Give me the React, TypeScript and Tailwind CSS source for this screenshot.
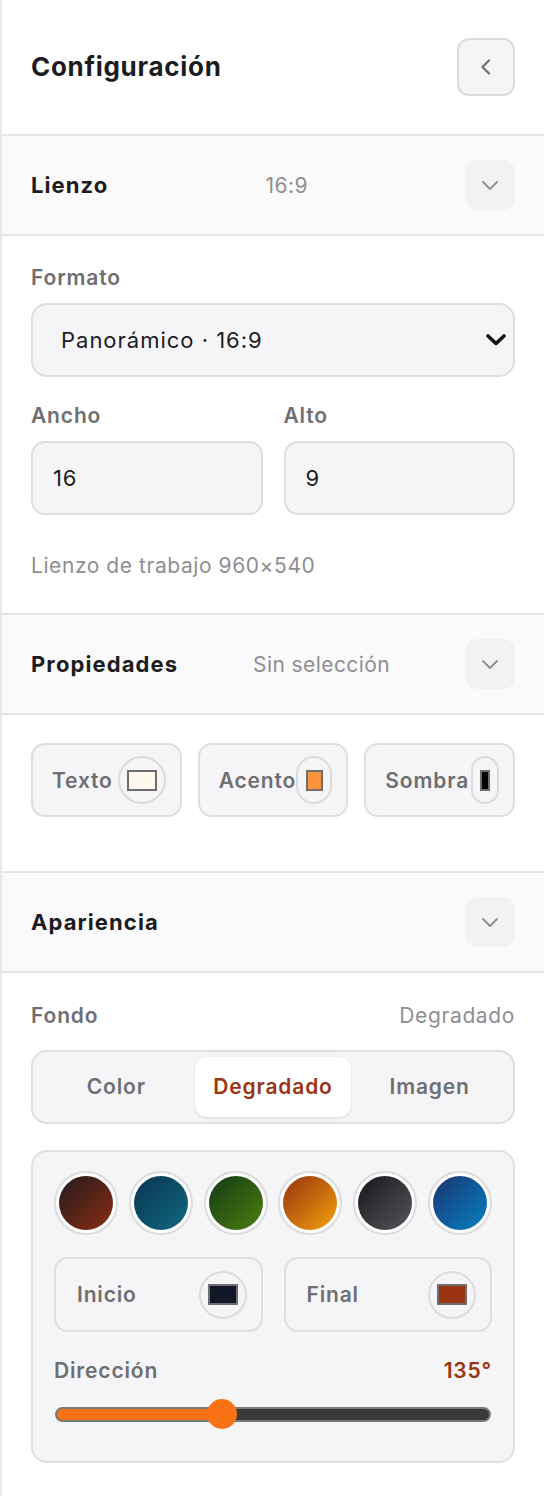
import React from "react";

function ChevronDownThin() {
  return (
    <svg width="18" height="11" viewBox="0 0 18 11" fill="none">
      <path d="M2 2 L9 9 L16 2" stroke="#8e8e93" strokeWidth="1.8" strokeLinecap="round" strokeLinejoin="round" />
    </svg>
  );
}

function SectionHeader({ title, summary }: { title: string; summary?: string }) {
  return (
    <div className="h-[100px] bg-[#fafafa] border-b-2 border-[#e5e5e7] flex items-center pl-[29px] pr-[29px]">
      <span className="text-[22px] font-bold tracking-[0.05em] text-[#1c1c1e] leading-none">{title}</span>
      <span className="flex-1 text-center text-[21px] tracking-[0.02em] text-[#8e8e93] leading-none">{summary ?? ""}</span>
      <div className="w-[50px] h-[50px] rounded-[12px] bg-[#f2f2f4] flex items-center justify-center">
        <ChevronDownThin />
      </div>
    </div>
  );
}

function ColorWell({ color, w, sw }: { color: string; w: number; sw: number }) {
  return (
    <div
      className="h-[48px] rounded-full border-2 border-[#dcdcde] flex items-center justify-center shrink-0"
      style={{ width: w }}
    >
      <div className="h-[21px] border-2 border-[#6e6e6e]" style={{ width: sw, background: color }} />
    </div>
  );
}

function Chip({ label, color, w, sw }: { label: string; color: string; w: number; sw: number }) {
  return (
    <div className="h-[74px] rounded-[14px] border-2 border-[#dedee0] bg-[#f5f5f7] flex items-center justify-between pl-[19px] pr-[14px]">
      <span className="text-[21px] font-semibold tracking-[0.04em] text-[#6e6e73] leading-none whitespace-nowrap">{label}</span>
      <ColorWell color={color} w={w} sw={sw} />
    </div>
  );
}

const swatches = [
  "bg-[linear-gradient(135deg,#231a20,#8a2d10)]",
  "bg-[linear-gradient(135deg,#0b3452,#0f6a80)]",
  "bg-[linear-gradient(135deg,#123a17,#4d7f10)]",
  "bg-[linear-gradient(135deg,#94340f,#f5a00c)]",
  "bg-[linear-gradient(135deg,#18181b,#55555c)]",
  "bg-[linear-gradient(135deg,#1c3570,#0580c4)]",
];

export default function App() {
  return (
    <div className="w-[544px] min-h-[1496px] bg-white border-l-2 border-[#e8e8ea] font-['Inter',_'Noto_Sans',sans-serif] text-[#1c1c1e]">
      {/* Header */}
      <div className="h-[136px] border-b-2 border-[#e5e5e7] flex items-center justify-between pl-[29px] pr-[29px]">
        <h1 className="text-[26px] font-bold tracking-[0.027em] leading-none text-[#1c1c1e]">Configuración</h1>
        <button className="w-[58px] h-[58px] rounded-[12px] border-2 border-[#dcdcde] bg-[#f5f5f7] flex items-center justify-center">
          <svg width="14" height="18" viewBox="0 0 14 18" fill="none">
            <path d="M10 2.5 L3.5 9 L10 15.5" stroke="#6e6e73" strokeWidth="2.2" strokeLinecap="round" strokeLinejoin="round" />
          </svg>
        </button>
      </div>

      {/* Lienzo */}
      <SectionHeader title="Lienzo" summary="16:9" />
      <div className="border-b-2 border-[#e5e5e7] pl-[29px] pr-[29px] pt-[28px] pb-[33px]">
        <div className="h-[28px] flex items-center text-[21px] font-semibold tracking-[0.04em] text-[#6e6e73]">Formato</div>
        <div className="mt-[11px] h-[74px] rounded-[16px] border-2 border-[#dedee0] bg-[#f5f5f7] flex items-center justify-between pl-[28px] pr-[6px]">
          <span className="text-[22px] tracking-[0.045em] text-[#1c1c1e]">Panorámico · 16:9</span>
          <svg width="22" height="14" viewBox="0 0 22 14" fill="none">
            <path d="M3 3 L11 10.5 L19 3" stroke="#111" strokeWidth="3.6" strokeLinecap="round" strokeLinejoin="round" />
          </svg>
        </div>
        <div className="mt-[25px] grid grid-cols-2 gap-[21px]">
          <div>
            <div className="h-[28px] flex items-center text-[21px] font-semibold tracking-[0.04em] text-[#6e6e73]">Ancho</div>
            <div className="mt-[11px] h-[74px] rounded-[14px] border-2 border-[#dedee0] bg-[#f5f5f7] flex items-center pl-[20px] text-[22px] tracking-[0.04em] text-[#1c1c1e]">16</div>
          </div>
          <div>
            <div className="h-[28px] flex items-center text-[21px] font-semibold tracking-[0.04em] text-[#6e6e73]">Alto</div>
            <div className="mt-[11px] h-[74px] rounded-[14px] border-2 border-[#dedee0] bg-[#f5f5f7] flex items-center pl-[20px] text-[22px] tracking-[0.04em] text-[#1c1c1e]">9</div>
          </div>
        </div>
        <div className="mt-[37px] h-[28px] flex items-center text-[21px] tracking-[0.027em] text-[#8e8e93]">Lienzo de trabajo 960×540</div>
      </div>

      {/* Propiedades */}
      <SectionHeader title="Propiedades" summary="Sin selección" />
      <div className="border-b-2 border-[#e5e5e7] pl-[29px] pr-[29px] pt-[28px] pb-[54px]">
        <div className="grid grid-cols-3 gap-[16px]">
          <Chip label="Texto" color="#fff8ee" w={48} sw={30} />
          <Chip label="Acento" color="#fb923c" w={36} sw={17} />
          <Chip label="Sombra" color="#000000" w={28} sw={10} />
        </div>
      </div>

      {/* Apariencia */}
      <SectionHeader title="Apariencia" />
      <div className="pl-[29px] pr-[29px] pt-[29px] pb-[30px]">
        <div className="h-[28px] flex items-center justify-between">
          <span className="text-[21px] font-semibold tracking-[0.04em] text-[#6e6e73]">Fondo</span>
          <span className="text-[21px] tracking-[0.03em] text-[#8e8e93]">Degradado</span>
        </div>
        <div className="mt-[20px] h-[74px] rounded-[16px] border-2 border-[#dedee0] bg-[#f5f5f7] p-[5px] grid grid-cols-3">
          <div className="flex items-center justify-center text-[21px] font-semibold tracking-[0.04em] text-[#6e6e73]">Color</div>
          <div className="flex items-center justify-center rounded-[12px] bg-white shadow-[0_1px_3px_rgba(0,0,0,0.12)] text-[21px] font-semibold tracking-[0.04em] text-[#9a3412]">Degradado</div>
          <div className="flex items-center justify-center text-[21px] font-semibold tracking-[0.04em] text-[#6e6e73]">Imagen</div>
        </div>

        <div className="mt-[26px] rounded-[16px] border-2 border-[#e0e0e2] bg-[#f5f5f7] px-[21px] pt-[19px] pb-[32px]">
          <div className="flex justify-between">
            {swatches.map((s, i) => (
              <div key={i} className="w-[64px] h-[64px] rounded-full border-2 border-[#dcdcde] bg-white flex items-center justify-center">
                <div className={`w-[54px] h-[54px] rounded-full ${s}`} />
              </div>
            ))}
          </div>

          <div className="mt-[22px] grid grid-cols-2 gap-[21px]">
            <div className="h-[75px] rounded-[14px] border-2 border-[#dedee0] flex items-center justify-between pl-[21px] pr-[14px]">
              <span className="text-[21px] font-semibold tracking-[0.04em] text-[#6e6e73]">Inicio</span>
              <ColorWell color="#111827" w={48} sw={30} />
            </div>
            <div className="h-[75px] rounded-[14px] border-2 border-[#dedee0] flex items-center justify-between pl-[21px] pr-[14px]">
              <span className="text-[21px] font-semibold tracking-[0.04em] text-[#6e6e73]">Final</span>
              <ColorWell color="#9a3412" w={48} sw={30} />
            </div>
          </div>

          <div className="mt-[25px] h-[28px] flex items-center justify-between">
            <span className="text-[21px] font-semibold tracking-[0.04em] text-[#6e6e73]">Dirección</span>
            <span className="text-[21px] font-semibold tracking-[0.04em] text-[#9a3412]">135°</span>
          </div>

          <div className="mt-[14px] relative h-[30px] flex items-center px-[1px]">
            <div className="w-full h-[15px] rounded-full border-2 border-[#7a7a7a] bg-[#3a3a3a] overflow-hidden">
              <div className="h-full bg-[#f97316]" style={{ width: "38.3%" }} />
            </div>
            <div className="absolute top-0 w-[30px] h-[30px] rounded-full bg-[#f97316]" style={{ left: "calc(38.3% - 15px)" }} />
          </div>
        </div>
      </div>
    </div>
  );
}
